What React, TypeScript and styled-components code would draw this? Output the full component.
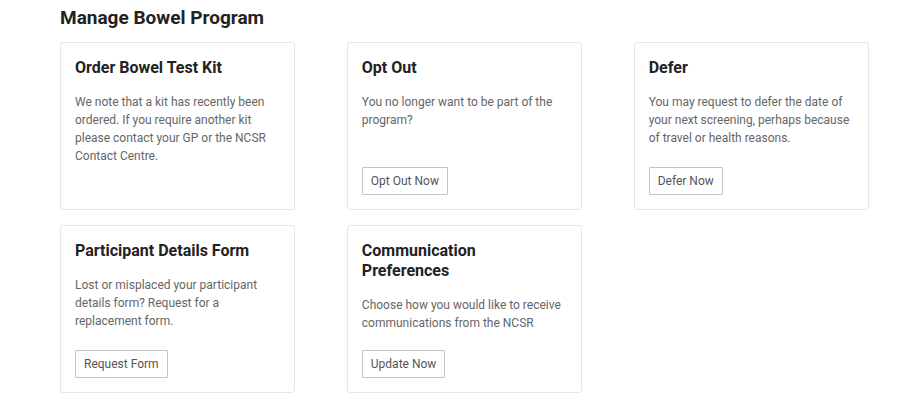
import React from "react";
import styled, { createGlobalStyle } from "styled-components";

const Global = createGlobalStyle`
  html, body { margin: 0; padding: 0; background: #ffffff; }
  body { font-family: Roboto, "Liberation Sans", Arial, sans-serif; }
`;

const Page = styled.main`
  padding: 6px 0 0 60px;
  width: 809px;
`;

const Heading = styled.h1`
  margin: 0 0 12px;
  font-size: 19px;
  line-height: 24px;
  font-weight: 700;
  color: #222222;
`;

const Grid = styled.div`
  display: grid;
  grid-template-columns: repeat(3, 1fr);
  column-gap: 51.5px;
  row-gap: 15px;
`;

const Card = styled.section`
  display: flex;
  flex-direction: column;
  align-items: flex-start;
  border: 1px solid #e6e6e6;
  border-radius: 3px;
  padding: 15px 14px 14px;
  background: #ffffff;
  min-height: 137px;
`;

const Title = styled.h2`
  margin: 0 0 15px;
  font-size: 16px;
  line-height: 20px;
  font-weight: 700;
  color: #222222;
`;

const Body = styled.p`
  margin: 0 0 18px;
  font-size: 12px;
  line-height: 18px;
  color: #666666;
`;

const Action = styled.button`
  margin-top: auto;
  height: 28px;
  padding: 0 8px;
  border: 1px solid #c4c4c4;
  border-radius: 1px;
  background: #ffffff;
  font-family: inherit;
  font-size: 12px;
  color: #555555;
  cursor: pointer;
`;

type Item = { title: React.ReactNode; body: string; action?: string };

const items: Item[] = [
  {
    title: "Order Bowel Test Kit",
    body: "We note that a kit has recently been ordered. If you require another kit please contact your GP or the NCSR Contact Centre.",
  },
  { title: "Opt Out", body: "You no longer want to be part of the program?", action: "Opt Out Now" },
  {
    title: "Defer",
    body: "You may request to defer the date of your next screening, perhaps because of travel or health reasons.",
    action: "Defer Now",
  },
  {
    title: "Participant Details Form",
    body: "Lost or misplaced your participant details form? Request for a replacement form.",
    action: "Request Form",
  },
  {
    title: (
      <>
        Communication
        <br />
        Preferences
      </>
    ),
    body: "Choose how you would like to receive communications from the NCSR",
    action: "Update Now",
  },
];

export default function App() {
  return (
    <>
      <Global />
      <Page>
        <Heading>Manage Bowel Program</Heading>
        <Grid>
          {items.map((it, i) => (
            <Card key={i}>
              <Title>{it.title}</Title>
              <Body>{it.body}</Body>
              {it.action && <Action>{it.action}</Action>}
            </Card>
          ))}
        </Grid>
      </Page>
    </>
  );
}
